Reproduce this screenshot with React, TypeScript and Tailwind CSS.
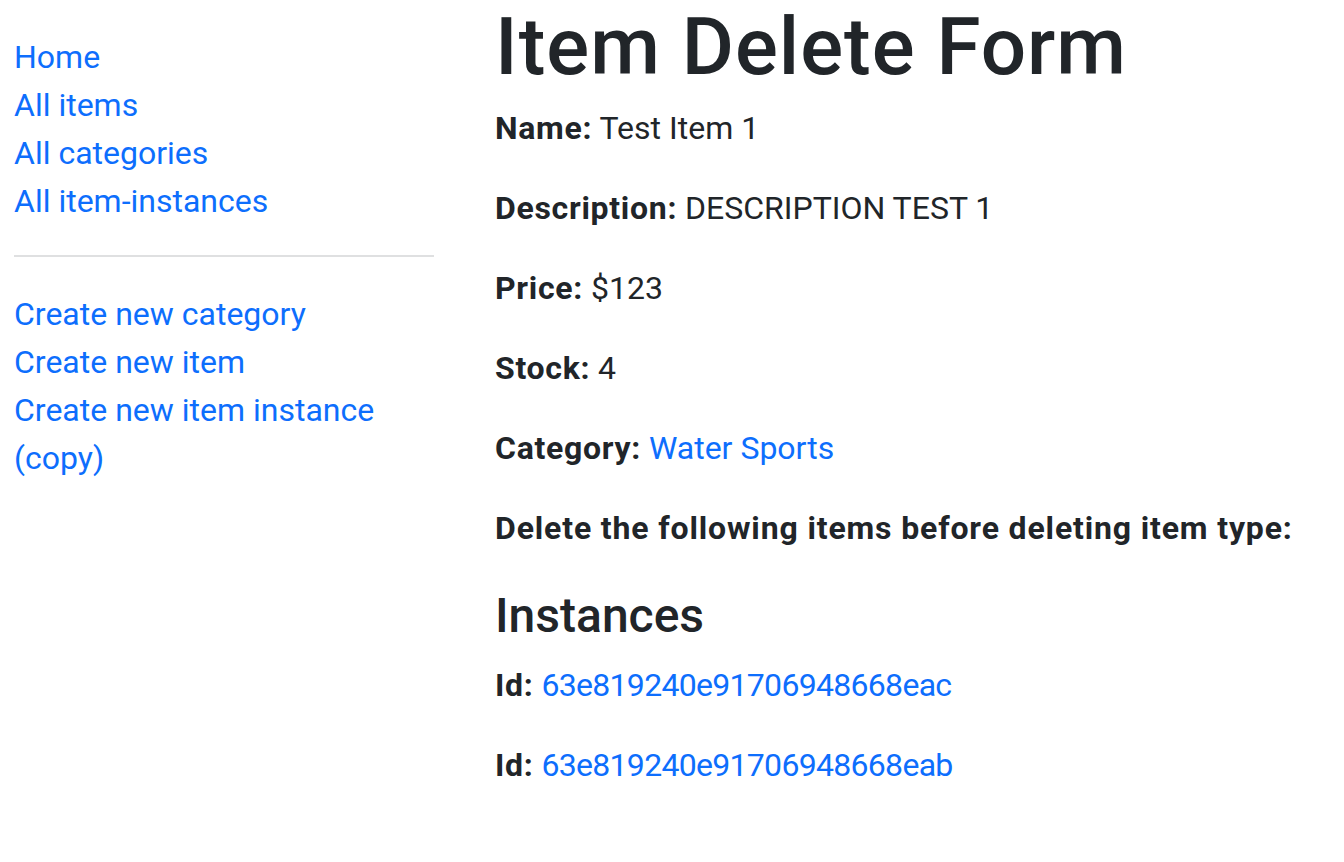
const NAV_MAIN = [
  { href: '/catalog', label: 'Home' },
  { href: '/catalog/items', label: 'All items' },
  { href: '/catalog/categories', label: 'All categories' },
  { href: '/catalog/iteminstances', label: 'All item-instances' },
]

const NAV_CREATE = [
  { href: '/catalog/category/create', label: 'Create new category' },
  { href: '/catalog/item/create', label: 'Create new item' },
  { href: '/catalog/iteminstance/create', label: 'Create new item instance (copy)' },
]

const INSTANCES = ['63e819240e91706948668eac', '63e819240e91706948668eab']

function Field({ label, children }: { label: string; children: React.ReactNode }) {
  return (
    <p className="mb-[32px]">
      <strong className="font-bold tracking-[0.7px]">{label}:</strong> {children}
    </p>
  )
}

export default function App() {
  return (
    <div className="min-h-screen bg-white flex text-[#212529] text-[32px] leading-[48px] font-['Roboto',sans-serif]">

      {/* Sidebar */}
      <aside className="w-[420px] ml-[14px] pt-[33px] shrink-0">
        <ul>
          {NAV_MAIN.map(l => (
            <li key={l.href}><a href={l.href} className="text-[#0d6efd]">{l.label}</a></li>
          ))}
        </ul>
        <hr className="mt-[30px] mb-[33px] border-0 border-t-2 border-[#dfe0e1]" />
        <ul>
          {NAV_CREATE.map(l => (
            <li key={l.href}><a href={l.href} className="text-[#0d6efd]">{l.label}</a></li>
          ))}
        </ul>
      </aside>

      {/* Main */}
      <main className="ml-[61px] flex-1">
        <h1 className="text-[80px] leading-[94px] font-medium tracking-[1px] mb-[10px]">Item Delete Form</h1>
        <Field label="Name">Test Item 1</Field>
        <Field label="Description">DESCRIPTION TEST 1</Field>
        <Field label="Price">$123</Field>
        <Field label="Stock">4</Field>
        <Field label="Category"><a href="#" className="text-[#0d6efd]">Water Sports</a></Field>
        <p className="font-bold tracking-[0.85px] mb-[35px]">Delete the following items before deleting item type:</p>
        <h3 className="text-[48px] leading-[58px] font-medium mb-[16px]">Instances</h3>
        {INSTANCES.map(id => (
          <Field key={id} label="Id"><a href="#" className="text-[#0d6efd] tracking-[-0.7px]">{id}</a></Field>
        ))}
      </main>

    </div>
  )
}
